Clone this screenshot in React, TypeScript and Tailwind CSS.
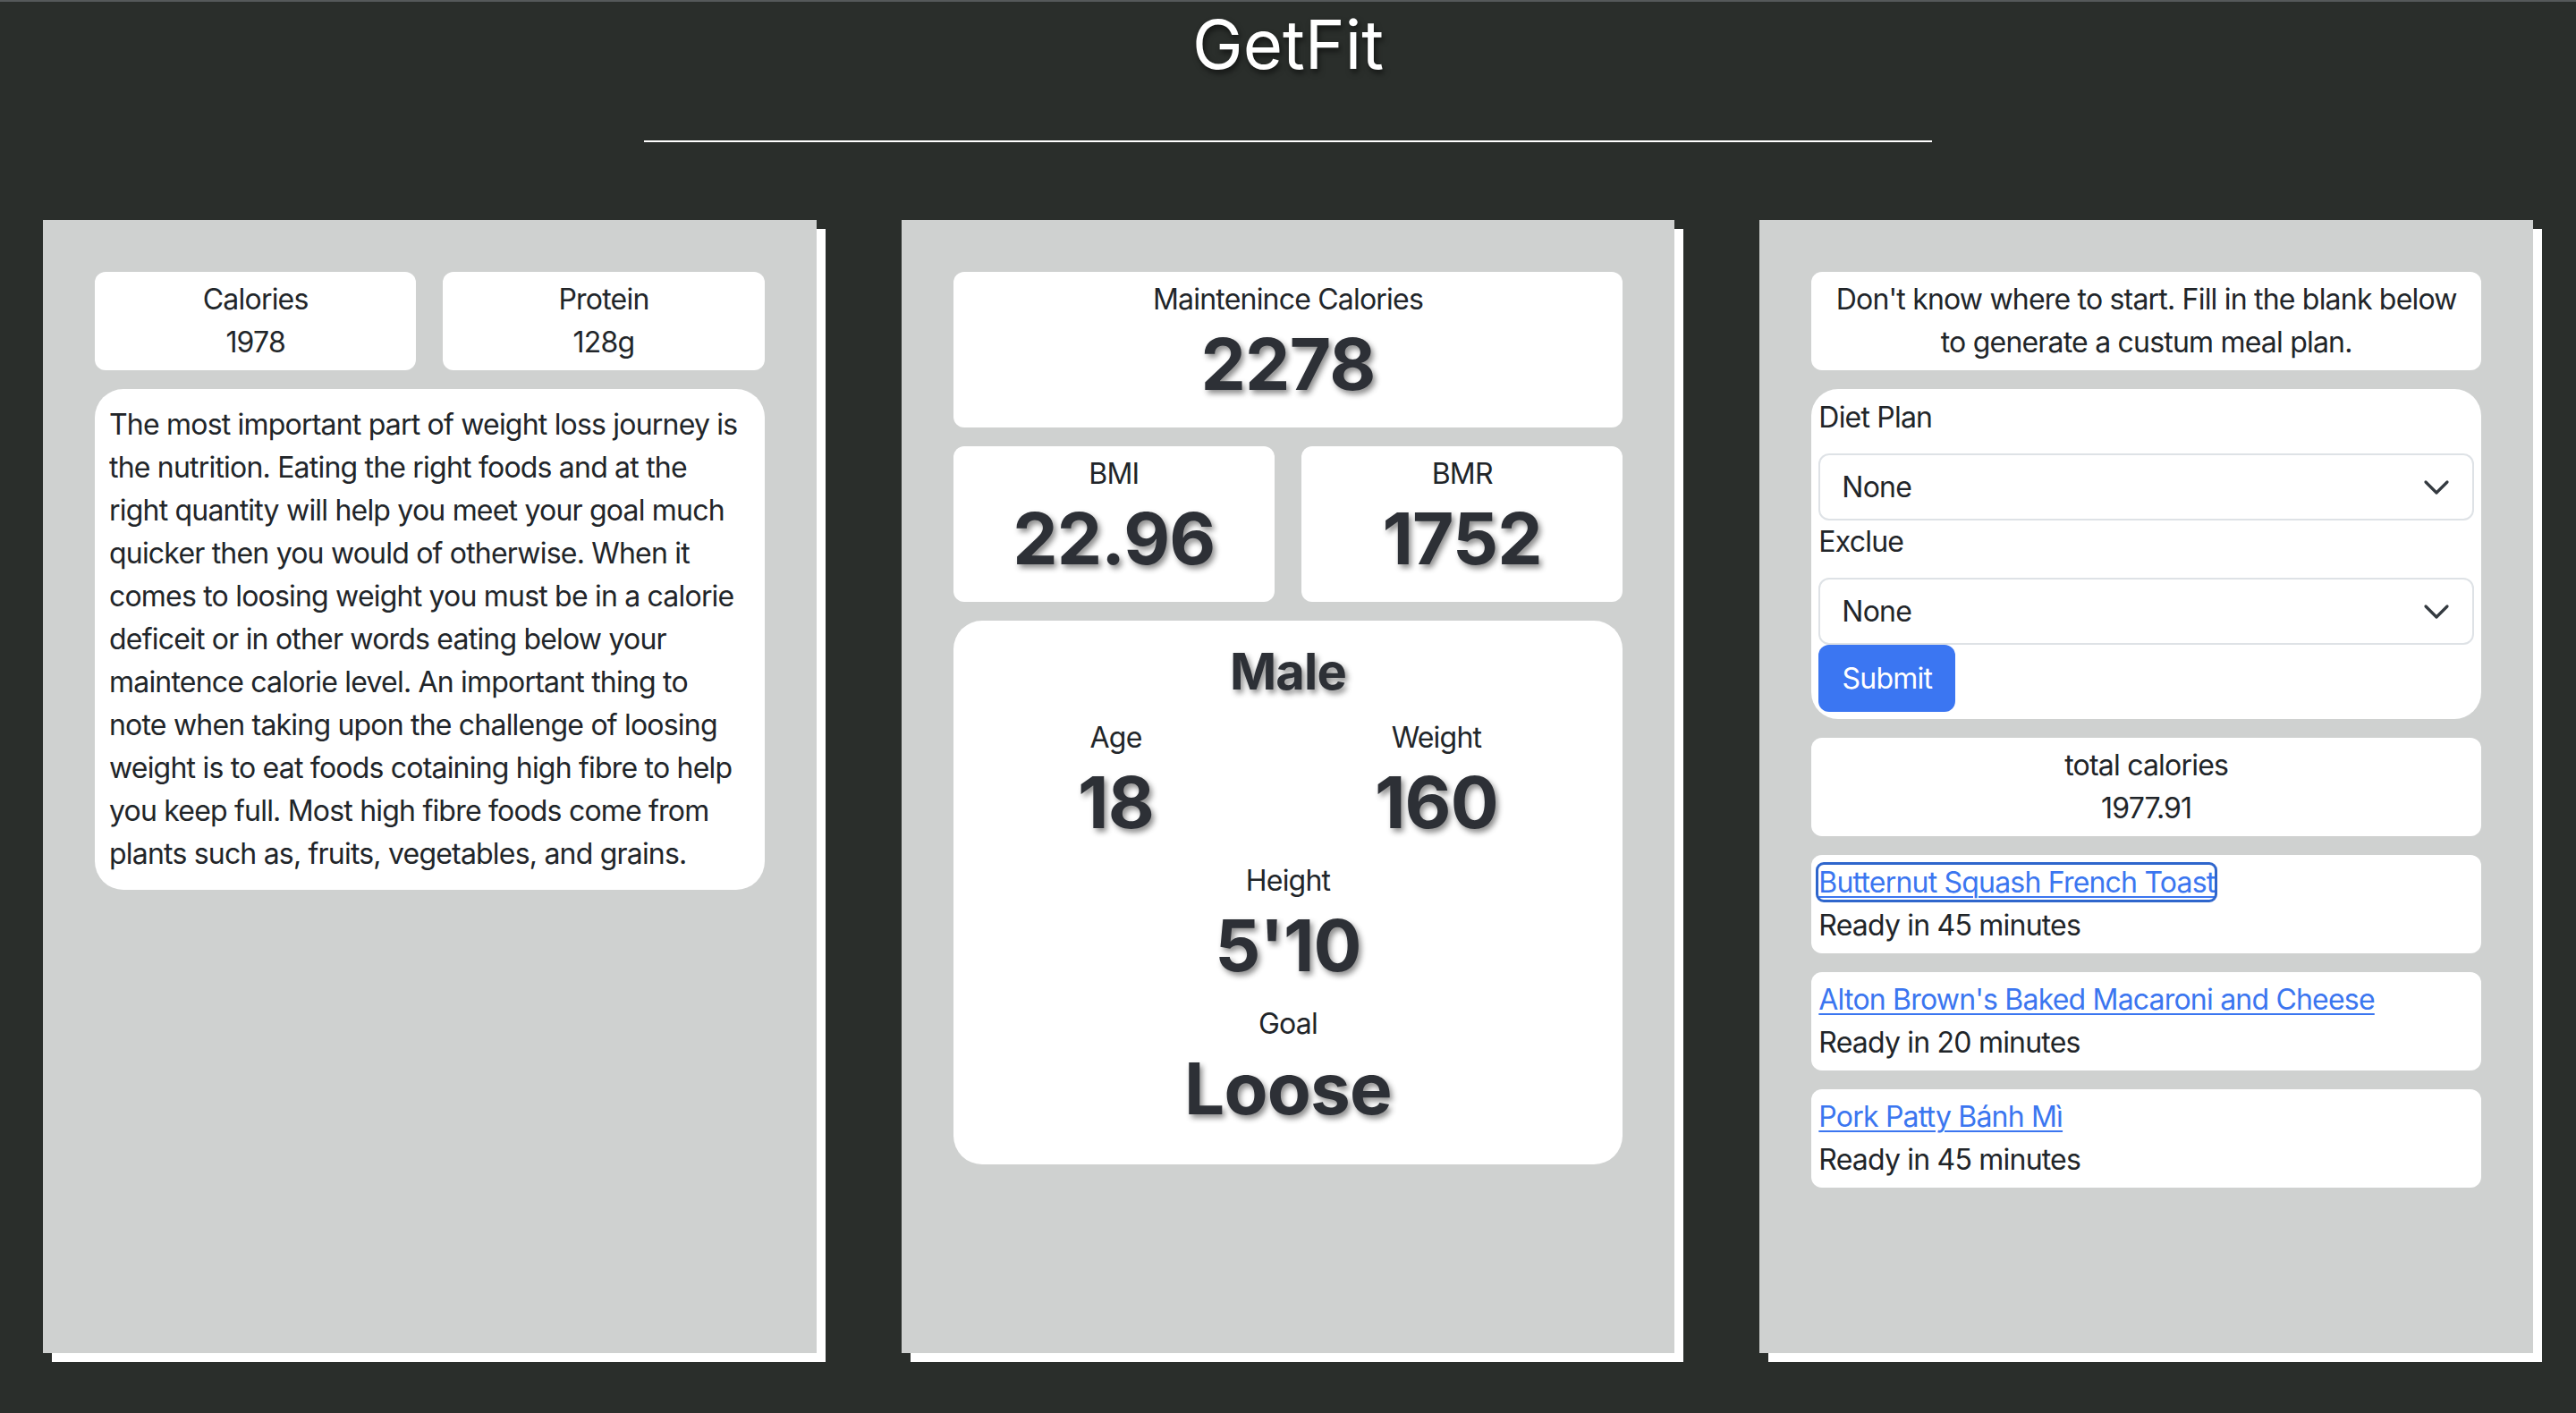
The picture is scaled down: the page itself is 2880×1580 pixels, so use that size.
import React from 'react';

const card = 'bg-white rounded-[12px] px-2 py-[7px] text-center';
const big = 'font-bold text-[80px] leading-[96px] text-[#2d3036] [text-shadow:3px_4px_6px_rgba(0,0,0,0.45)]';

function Stat({ label, value, className = '' }: { label: string; value: string; className?: string }) {
  return (
    <div className={className}>
      <div>{label}</div>
      <div className={`${big} mb-4`}>{value}</div>
    </div>
  );
}

function Recipe({ title, minutes, focused }: { title: string; minutes: number; focused?: boolean }) {
  return (
    <div className="bg-white rounded-[12px] px-2 py-[7px]">
      <a
        href="#"
        className={`text-[#3b76f0] underline decoration-2 underline-offset-[4px] ${focused ? 'outline-[3px] outline-solid outline-[#2f66cc] rounded-[6px]' : ''}`}
      >
        {title}
      </a>
      <div>Ready in {minutes} minutes</div>
    </div>
  );
}

function Select() {
  return (
    <div className="relative h-[75px] rounded-[12px] border-2 border-[#dee2e6] bg-white flex items-center pl-[24px]">
      <span>None</span>
      <svg className="absolute right-[24px] top-1/2 -translate-y-1/2" width="32" height="24" viewBox="0 0 16 12" fill="none">
        <path d="M2 3l6 6 6-6" stroke="#343a40" strokeWidth="1.6" strokeLinecap="round" strokeLinejoin="round" />
      </svg>
    </div>
  );
}

export default function App() {
  return (
    <div className="min-h-screen bg-[#2a2e2b] border-t-2 border-[#55595a] font-[Inter,sans-serif] text-[32px] leading-[48px] text-[#212529] tracking-[-0.025em]">
      <h1 className="pt-[4px] text-center text-white text-[76px] leading-[86px] font-normal tracking-normal [text-shadow:2px_4px_6px_rgba(0,0,0,0.55)]">
        GetFit
      </h1>
      <div className="w-1/2 mx-auto mt-[65px] h-[2px] bg-white" />

      <div className="flex gap-[95px] px-[48px] mt-[87px] pb-[60px]">
        {/* left */}
        <div className="w-[865px] h-[1267px] bg-[#cfd1d0] shadow-[10px_10px_0_#fff] p-[58px] flex flex-col gap-[21px]">
          <div className="grid grid-cols-2 gap-[30px]">
            <div className={card}>
              <div>Calories</div>
              <div>1978</div>
            </div>
            <div className={card}>
              <div>Protein</div>
              <div>128g</div>
            </div>
          </div>
          <div className="bg-white rounded-[32px] px-4 py-4">
            The most important part of weight loss journey is the nutrition. Eating the right foods and at the right quantity will help you meet your goal much quicker then you would of otherwise. When it comes to loosing weight you must be in a calorie deficeit or in other words eating below your maintence calorie level. An important thing to note when taking upon the challenge of loosing weight is to eat foods cotaining high fibre to help you keep full. Most high fibre foods come from plants such as, fruits, vegetables, and grains.
          </div>
        </div>

        {/* middle */}
        <div className="w-[865px] h-[1267px] bg-[#cfd1d0] shadow-[10px_10px_0_#fff] p-[58px] flex flex-col gap-[21px]">
          <Stat label="Maintenince Calories" value="2278" className={card} />
          <div className="grid grid-cols-2 gap-[30px]">
            <Stat label="BMI" value="22.96" className={card} />
            <Stat label="BMR" value="1752" className={card} />
          </div>
          <div className="bg-white rounded-[32px] px-4 pt-[24px] pb-[21px] text-center">
            <div className="font-bold text-[56px] leading-[67px] mb-4 text-[#2d3036] [text-shadow:3px_4px_6px_rgba(0,0,0,0.45)]">Male</div>
            <div className="flex justify-around">
              <Stat label="Age" value="18" />
              <Stat label="Weight" value="160" />
            </div>
            <Stat label="Height" value="5'10" />
            <Stat label="Goal" value="Loose" />
          </div>
        </div>

        {/* right */}
        <div className="w-[865px] h-[1267px] bg-[#cfd1d0] shadow-[10px_10px_0_#fff] p-[58px] flex flex-col gap-[21px]">
          <div className="bg-white rounded-[12px] px-4 py-[7px] text-center">
            Don't know where to start. Fill in the blank below to generate a custum meal plan.
          </div>
          <div className="bg-white rounded-[30px] px-2 py-2">
            <div className="mb-4">Diet Plan</div>
            <Select />
            <div className="mb-4">Exclue</div>
            <Select />
            <button className="w-[153px] h-[75px] bg-[#3b76f2] text-white rounded-[12px]">Submit</button>
          </div>
          <div className={card}>
            <div>total calories</div>
            <div>1977.91</div>
          </div>
          <Recipe title="Butternut Squash French Toast" minutes={45} focused />
          <Recipe title="Alton Brown's Baked Macaroni and Cheese" minutes={20} />
          <Recipe title="Pork Patty Bánh Mì" minutes={45} />
        </div>
      </div>
    </div>
  );
}
